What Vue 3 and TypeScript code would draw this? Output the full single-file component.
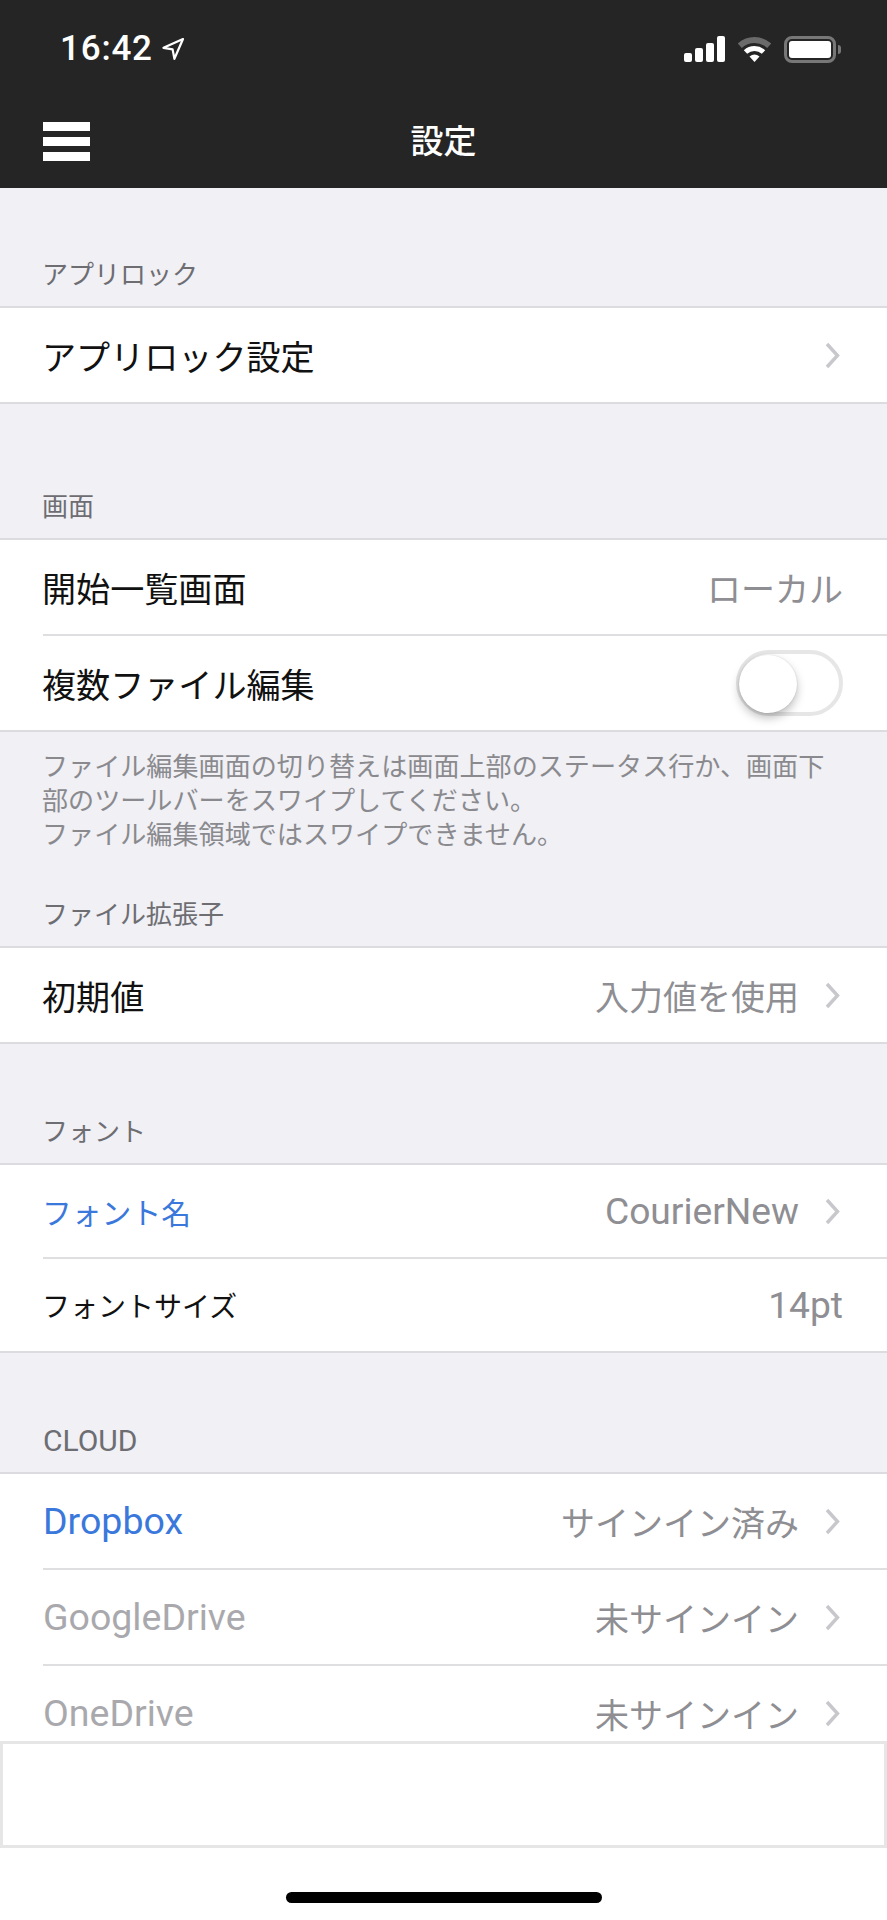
<script setup lang="ts">
type Tone = 'normal' | 'blue' | 'muted'

type Row = {
  label: string
  value?: string
  tone?: Tone
  small?: boolean
  chevron?: boolean
  toggle?: boolean
  compact?: boolean
}

type Section = {
  title: string
  gap?: 'first' | 'tall' | 'after-note'
  rows: Row[]
  note?: string[]
}

const sections: Section[] = [
  {
    title: 'アプリロック',
    gap: 'first',
    rows: [{ label: 'アプリロック設定', chevron: true }],
  },
  {
    title: '画面',
    gap: 'tall',
    rows: [
      { label: '開始一覧画面', value: 'ローカル' },
      { label: '複数ファイル編集', toggle: true },
    ],
    note: [
      'ファイル編集画面の切り替えは画面上部のステータス行か、画面下',
      '部のツールバーをスワイプしてください。',
      'ファイル編集領域ではスワイプできません。',
    ],
  },
  {
    title: 'ファイル拡張子',
    gap: 'after-note',
    rows: [{ label: '初期値', value: '入力値を使用', chevron: true }],
  },
  {
    title: 'フォント',
    rows: [
      { label: 'フォント名', value: 'CourierNew', tone: 'blue', small: true, chevron: true, compact: true },
      { label: 'フォントサイズ', value: '14pt', small: true, compact: true },
    ],
  },
  {
    title: 'CLOUD',
    rows: [
      { label: 'Dropbox', value: 'サインイン済み', tone: 'blue', chevron: true },
      { label: 'GoogleDrive', value: '未サインイン', tone: 'muted', chevron: true },
      { label: 'OneDrive', value: '未サインイン', tone: 'muted', chevron: true },
    ],
  },
]

// latin text sits wider in the reference than Roboto does at the kana size
function isLatin(text: string) {
  return /^[\x20-\x7e]+$/.test(text)
}
</script>

<template>
  <div class="screen">
    <header class="top">
      <div class="status">
        <div class="clock">
          <span class="time">16:42</span>
          <svg class="arrow" width="22" height="22" viewBox="0 0 22 22">
            <path d="M21 1 L1.5 9.8 L10.6 11.4 L12.4 20.8 Z" fill="none" stroke="#fff" stroke-width="2.2" stroke-linejoin="round" />
          </svg>
        </div>
        <div class="indicators">
          <div class="signal">
            <span class="b1"></span>
            <span class="b2"></span>
            <span class="b3"></span>
            <span class="b4"></span>
          </div>
          <svg width="33" height="25" viewBox="0 0 33 25">
            <path d="M1.8 8.7 A22 22 0 0 1 31.2 8.7" fill="none" stroke="#6a6a6a" stroke-width="6" />
            <path d="M7.5 15 A13.5 13.5 0 0 1 25.5 15" fill="none" stroke="#fff" stroke-width="5" />
            <path d="M16.5 25 L11.5 19.5 Q16.5 15.5 21.5 19.5 Z" fill="#fff" />
          </svg>
          <div class="battery">
            <div class="battery-body"><div class="battery-fill"></div></div>
            <div class="battery-tip"></div>
          </div>
        </div>
      </div>
      <nav class="nav">
        <div class="menu">
          <span></span>
          <span></span>
          <span></span>
        </div>
        <h1>設定</h1>
      </nav>
    </header>

    <main class="list">
      <section v-for="section in sections" :key="section.title">
        <h2 class="section-title" :class="[section.gap, { latin: isLatin(section.title) }]">{{ section.title }}</h2>
        <div class="group">
          <div
            v-for="row in section.rows"
            :key="row.label"
            class="row"
            :class="{ compact: row.compact }"
          >
            <div class="row-inner">
              <span class="label" :class="[row.tone, { small: row.small, latin: isLatin(row.label) }]">{{ row.label }}</span>
              <span v-if="row.value" class="value" :class="{ latin: isLatin(row.value) }">{{ row.value }}</span>
              <svg v-if="row.chevron" class="chevron" width="15" height="27" viewBox="0 0 15 27">
                <path d="M2 2 L12.5 13.5 L2 25" fill="none" stroke="#c7c7cc" stroke-width="3.4" />
              </svg>
              <div v-if="row.toggle" class="toggle"><div class="knob"></div></div>
            </div>
          </div>
        </div>
        <div v-if="section.note" class="note">
          <p v-for="line in section.note" :key="line">{{ line }}</p>
        </div>
      </section>
    </main>

    <div class="ad"></div>
    <div class="home">
      <div class="home-bar"></div>
    </div>
  </div>
</template>

<style scoped>
.screen {
  width: 887px;
  height: 1920px;
  display: flex;
  flex-direction: column;
  background: #fff;
  font-family: Roboto, "Noto Sans CJK JP", sans-serif;
  overflow: hidden;
}

.top {
  height: 188px;
  flex: none;
  background: #252525;
  color: #fff;
}

.status {
  height: 94px;
  display: flex;
  align-items: center;
  justify-content: space-between;
  padding: 4px 46px 0 60px;
  box-sizing: border-box;
}

.clock {
  display: flex;
  align-items: center;
  gap: 9px;
}

.time {
  font-size: 35px;
  font-weight: 500;
  line-height: 34px;
  letter-spacing: 0.8px;
}

.indicators {
  display: flex;
  align-items: center;
  gap: 13px;
}

.signal {
  display: flex;
  align-items: flex-end;
  gap: 3px;
  height: 26px;
}

.signal span {
  width: 8px;
  background: #fff;
  border-radius: 2px;
}

.b1 { height: 9px; }
.b2 { height: 14px; }
.b3 { height: 19px; }
.b4 { height: 26px; }

.battery {
  display: flex;
  align-items: center;
  gap: 2px;
}

.battery-body {
  width: 52px;
  height: 27px;
  box-sizing: border-box;
  border: 3px solid #777;
  border-radius: 8px;
  padding: 2px;
}

.battery-fill {
  height: 100%;
  background: #fff;
  border-radius: 3px;
}

.battery-tip {
  width: 3px;
  height: 9px;
  background: #777;
  border-radius: 0 3px 3px 0;
}

.nav {
  height: 94px;
  display: grid;
  grid-template-columns: 1fr auto 1fr;
  align-items: center;
  padding: 0 43px;
}

.menu {
  display: flex;
  flex-direction: column;
  gap: 6px;
  width: 47px;
}

.menu span {
  height: 9px;
  background: #fff;
  filter: blur(0.7px);
}

h1 {
  margin: 2px 0 0;
  font-size: 33px;
  font-weight: 500;
  line-height: 40px;
}

.list {
  flex: 1;
  min-height: 0;
  overflow: hidden;
  background: #f0f0f5;
}

.section-title {
  margin: 0;
  height: 119px;
  box-sizing: border-box;
  display: flex;
  align-items: flex-end;
  padding: 0 42px 14px;
  font-size: 26px;
  font-weight: 400;
  line-height: 34px;
  color: #6d6d72;
}

.section-title.first { height: 118px; }
.section-title.tall { height: 134px; }
.section-title.after-note { height: 93px; }
.section-title.latin { font-size: 30px; padding-left: 43px; }

.group {
  background: #fff;
  border-top: 2px solid #dcdce0;
  border-bottom: 2px solid #dcdce0;
}

.row {
  padding-left: 43px;
}

.row-inner {
  height: 94px;
  box-sizing: border-box;
  display: flex;
  align-items: center;
  padding-right: 44px;
}

.row + .row .row-inner {
  height: 96px;
  border-top: 2px solid #dfdfe2;
}

.row.compact .row-inner {
  height: 92px;
}

.row.compact + .row.compact .row-inner {
  height: 94px;
}

.label {
  flex: 1;
  margin-left: -1px;
  font-size: 34.1px;
  color: #111;
}

.label.latin { font-size: 37.5px; margin-left: 0; }
.label.small { font-size: 28px; }
.label.small.blue { font-size: 29.8px; }
.label.blue { color: #3a78dc; }
.label.muted { color: #a9a9ad; }

.value {
  font-size: 34px;
  color: #8e8e93;
}

.value.latin { font-size: 37.2px; }

.chevron {
  flex: none;
  margin-left: 26px;
  margin-right: 3px;
}

.toggle {
  width: 107px;
  height: 66px;
  box-sizing: border-box;
  border: 4px solid #e6e6e6;
  border-radius: 33px;
  position: relative;
}

.knob {
  position: absolute;
  left: -1px;
  top: 1px;
  width: 58px;
  height: 58px;
  border-radius: 50%;
  background: #fff;
  box-shadow: 0 5px 10px rgba(0, 0, 0, 0.25), 0 0 2px rgba(0, 0, 0, 0.15);
}

.note {
  padding: 18px 42px 0;
  height: 121px;
  box-sizing: border-box;
  font-size: 26.1px;
  line-height: 34px;
  color: #8a8a8e;
}

.note p {
  margin: 0;
  white-space: nowrap;
}

.ad {
  height: 107px;
  flex: none;
  box-sizing: border-box;
  background: #fff;
  border: 3px solid #e6e6e6;
}

.home {
  height: 72px;
  flex: none;
  padding-top: 44px;
  box-sizing: border-box;
  display: flex;
  justify-content: center;
  background: #fff;
}

.home-bar {
  width: 316px;
  height: 11px;
  border-radius: 6px;
  background: #000;
}
</style>
